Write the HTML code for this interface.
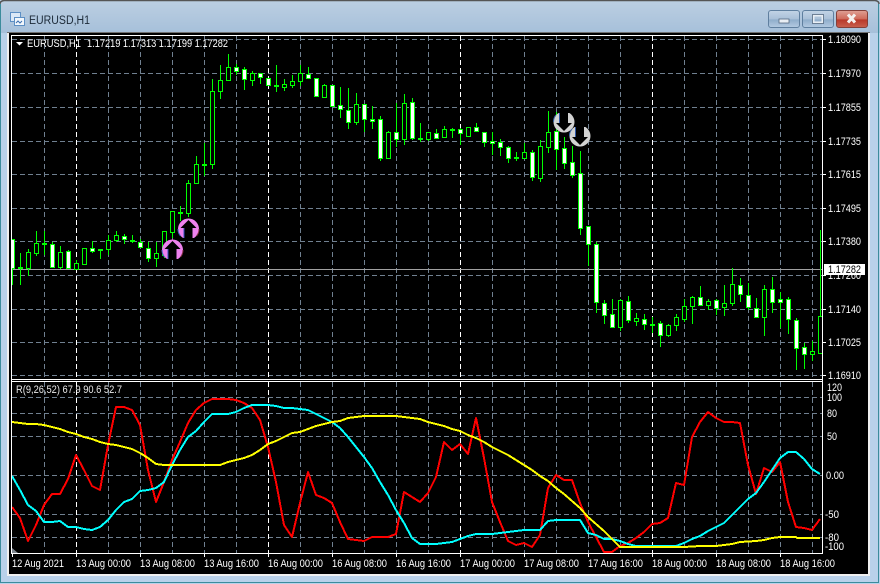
<!DOCTYPE html>
<html><head><meta charset="utf-8"><style>
html,body{margin:0;padding:0;background:#fff}
#w{position:relative;width:880px;height:584px;overflow:hidden}
svg{position:absolute;left:0;top:0;font-family:"Liberation Sans",sans-serif}
</style></head><body><div id="w">
<svg width="880" height="584" viewBox="0 0 880 584">
<defs>
<linearGradient id="t" x1="0" y1="0" x2="0" y2="1"><stop offset="0" stop-color="#bccfe2"/><stop offset="1" stop-color="#a6c0da"/></linearGradient>
<linearGradient id="b1" x1="0" y1="0" x2="0" y2="1"><stop offset="0" stop-color="#c3d4e6"/><stop offset=".5" stop-color="#a9c0d8"/><stop offset=".55" stop-color="#8fadcb"/><stop offset="1" stop-color="#b4cbe2"/></linearGradient>
<linearGradient id="b2" x1="0" y1="0" x2="0" y2="1"><stop offset="0" stop-color="#dfa095"/><stop offset=".5" stop-color="#cf6a5a"/><stop offset=".55" stop-color="#b8382a"/><stop offset="1" stop-color="#c9604e"/></linearGradient>
<clipPath id="c"><rect x="12" y="36" width="810" height="343"/></clipPath>
<clipPath id="d"><rect x="12" y="382" width="810" height="171"/></clipPath>
<clipPath id="u"><rect x="-12" y="-12" width="24" height="21"/></clipPath>
<clipPath id="v"><rect x="-12" y="-9" width="24" height="21"/></clipPath>
<g id="up" clip-path="url(#u)"><circle r="10.5" fill="#ee82ee"/><path d="M-10.5 0A10.5 10.5 0 0 0-8 7" fill="none" stroke="#4060c0"/><path d="M10.5 0A10.5 10.5 0 0 1 8 7" fill="none" stroke="#803040"/><path d="M0-9L8-1H4V10H-4V-1H-8Z" fill="#000"/><rect x="-5" y="-1" width="1" height="11" fill="#3050c0"/></g>
<g id="dn" clip-path="url(#v)"><circle r="10.5" fill="#d3d3d3"/><path d="M-10.5 0A10.5 10.5 0 0 1-8-7" fill="none" stroke="#4068a8"/><path d="M0 9L8 1H4V-10H-4V1H-8Z" fill="#000"/><rect x="-5" y="-10" width="1" height="11" fill="#3058a8"/></g>
</defs>
<rect width="880" height="584" fill="#b9d1ea"/>
<rect width="880" height="33" fill="url(#t)"/>
<path d="M0 4Q0 1 4 .5H875Q879 1 879 4" fill="none" stroke="#555" stroke-width="1.5"/>
<path d="M.5 4V582.5H878.5V4" fill="none" stroke="#3c8c9c"/>
<rect x="7" y="32" width="863" height="544" fill="#f0f0f0"/>
<rect x="9" y="33" width="859" height="541" fill="#000"/>
<path d="M7.5 33V32.5H870" fill="none" stroke="#707070"/>

<!-- icon -->
<rect x="10.5" y="12.5" width="10" height="9" fill="#dbe8f6" stroke="#5d8fc4"/>
<rect x="14.5" y="17.5" width="10" height="8" fill="#f2f7fc" stroke="#5d8fc4"/>
<path d="M16 23l2-2 2 2 2-2" fill="none" stroke="#3a6fb0"/>
<text x="29" y="24" font-size="11.5" fill="#1c2a38" textLength="61" lengthAdjust="spacingAndGlyphs">EURUSD,H1</text>

<!-- window buttons -->
<rect x="768.5" y="10.5" width="31" height="17" rx="2.5" fill="url(#b1)" stroke="#5f7f9f"/>
<rect x="779" y="19" width="10" height="4" fill="#e8eef4" stroke="#566a80" stroke-width=".8"/>
<rect x="802.5" y="10.5" width="31" height="17" rx="2.5" fill="url(#b1)" stroke="#5f7f9f"/>
<rect x="813.5" y="15.5" width="9" height="7" fill="none" stroke="#e8eef4" stroke-width="2"/>
<rect x="812.5" y="14.5" width="11" height="9" fill="none" stroke="#566a80" stroke-width=".8"/>
<rect x="836.5" y="10.5" width="31" height="17" rx="2.5" fill="url(#b2)" stroke="#84403a"/>
<path d="M848 14.5l7 8M855 14.5l-7 8" stroke="#f4f0ee" stroke-width="3"/>

<!-- grid main -->
<g shape-rendering="crispEdges" fill="none" stroke-dasharray="5 3">
<path stroke="#708090" d="M12 39.5H822M12 73.5H822M12 107.5H822M12 141.5H822M12 174.5H822M12 208.5H822M12 241.5H822M12 275.5H822M12 309.5H822M12 342.5H822M12 375.5H822M12 397.5H822M12 413.5H822M12 436.5H822M12 475.5H822M12 514.5H822M12 537.5H822"/>
<path stroke="#708090" d="M44.5 36V379M108.5 36V379M140.5 36V379M172.5 36V379M204.5 36V379M236.5 36V379M300.5 36V379M332.5 36V379M364.5 36V379M396.5 36V379M428.5 36V379M492.5 36V379M524.5 36V379M556.5 36V379M588.5 36V379M620.5 36V379M684.5 36V379M716.5 36V379M748.5 36V379M780.5 36V379M812.5 36V379"/>
<path stroke="#708090" d="M44.5 382V553M108.5 382V553M140.5 382V553M172.5 382V553M204.5 382V553M236.5 382V553M300.5 382V553M332.5 382V553M364.5 382V553M396.5 382V553M428.5 382V553M492.5 382V553M524.5 382V553M556.5 382V553M588.5 382V553M620.5 382V553M684.5 382V553M716.5 382V553M748.5 382V553M780.5 382V553M812.5 382V553"/>
<path stroke="#fff" d="M76.5 36V379M268.5 36V379M460.5 36V379M652.5 36V379M76.5 382V553M268.5 382V553M460.5 382V553M652.5 382V553"/>
</g>
<path d="M12 269.5H822" stroke="#a0a0a0" shape-rendering="crispEdges"/>

<!-- candles -->
<g clip-path="url(#c)" shape-rendering="crispEdges" stroke="#0f0" stroke-width="1">
<path fill="none" d="M12.5 239V285M20.5 253V285M28.5 249V276M36.5 231V256M44.5 231V255M52.5 242V267M60.5 246V269M68.5 250V269M76.5 260V269M84.5 248V265M92.5 241V253M100.5 249V259M108.5 235V255M116.5 231V242M124.5 234V244M132.5 235V243M140.5 239V248M148.5 242V262M156.5 242V267M164.5 231V258M172.5 211V238M180.5 206V221M188.5 180V217M196.5 156V183M204.5 143V176M212.5 79V169M220.5 65V99M228.5 54V81M236.5 64V75M244.5 67V90M252.5 71V86M260.5 73V84M268.5 78V86M276.5 65V92M284.5 79V91M292.5 75V88M300.5 65V86M308.5 67V79M316.5 78V97M324.5 84V97M332.5 85V106M340.5 87V118M348.5 88V129M356.5 93V125M364.5 104V132M372.5 106V129M380.5 116V161M388.5 131V158M396.5 103V147M404.5 94V145M412.5 98V140M420.5 123V142M428.5 132V141M436.5 129V139M444.5 126V138M452.5 128V138M460.5 128V145M468.5 127V136M476.5 123V132M484.5 132V147M492.5 132V155M500.5 139V156M508.5 146V163M516.5 152V161M524.5 143V158M532.5 150V181M540.5 140V182M548.5 111V153M556.5 112V170M564.5 137V169M572.5 146V178M580.5 151V235M588.5 226V266M596.5 242V313M604.5 300V324M612.5 299V327M620.5 299V331M628.5 296V323M636.5 313V326M644.5 314V330M652.5 317V333M660.5 321V347M668.5 324V337M676.5 314V331M684.5 299V322M692.5 296V324M700.5 286V306M708.5 299V310M716.5 299V315M724.5 285V316M732.5 268V306M740.5 278V302M748.5 283V310M756.5 298V317M764.5 285V336M772.5 277V313M780.5 292V328M788.5 297V334M796.5 318V370M804.5 343V369M812.5 341V361M820.5 230V353"/>
<path fill="#000" d="M26.5 252.5h4v16h-4zM34.5 243.5h4v10h-4zM58.5 252.5h4v15h-4zM74.5 263.5h4v6h-4zM82.5 248.5h4v16h-4zM106.5 240.5h4v9h-4zM114.5 235.5h4v5h-4zM154.5 253.5h4v5h-4zM162.5 231.5h4v24h-4zM170.5 211.5h4v21h-4zM186.5 183.5h4v30h-4zM194.5 164.5h4v19h-4zM210.5 91.5h4v73h-4zM218.5 80.5h4v11h-4zM226.5 67.5h4v13h-4zM250.5 73.5h4v7h-4zM282.5 84.5h4v3h-4zM290.5 81.5h4v4h-4zM298.5 73.5h4v8h-4zM322.5 85.5h4v12h-4zM354.5 104.5h4v18h-4zM386.5 132.5h4v26h-4zM402.5 103.5h4v36h-4zM426.5 132.5h4v7h-4zM442.5 129.5h4v8h-4zM466.5 127.5h4v9h-4zM522.5 152.5h4v6h-4zM538.5 146.5h4v32h-4zM546.5 132.5h4v15h-4zM618.5 300.5h4v27h-4zM634.5 318.5h4v3h-4zM666.5 325.5h4v10h-4zM674.5 317.5h4v8h-4zM682.5 306.5h4v13h-4zM690.5 297.5h4v9h-4zM706.5 301.5h4v4h-4zM722.5 303.5h4v4h-4zM730.5 284.5h4v19h-4zM762.5 289.5h4v28h-4zM810.5 351.5h4v3h-4zM818.5 316.5h4v37h-4z"/>
<path fill="#fff" d="M10.5 239.5h4v29h-4zM18.5 267.5h4v1h-4zM42.5 243.5h4v1h-4zM50.5 244.5h4v23h-4zM66.5 251.5h4v17h-4zM90.5 248.5h4v3h-4zM98.5 249.5h4v1h-4zM122.5 236.5h4v3h-4zM130.5 240.5h4v1h-4zM138.5 242.5h4v5h-4zM146.5 248.5h4v10h-4zM178.5 212.5h4v1h-4zM202.5 164.5h4v1h-4zM234.5 67.5h4v4h-4zM242.5 69.5h4v10h-4zM258.5 73.5h4v4h-4zM266.5 78.5h4v7h-4zM274.5 85.5h4v1h-4zM306.5 74.5h4v4h-4zM314.5 78.5h4v18h-4zM330.5 85.5h4v21h-4zM338.5 105.5h4v4h-4zM346.5 110.5h4v12h-4zM362.5 104.5h4v15h-4zM370.5 119.5h4v2h-4zM378.5 119.5h4v39h-4zM394.5 132.5h4v7h-4zM410.5 102.5h4v36h-4zM418.5 138.5h4v1h-4zM434.5 133.5h4v5h-4zM450.5 129.5h4v1h-4zM458.5 129.5h4v4h-4zM474.5 127.5h4v4h-4zM482.5 132.5h4v10h-4zM490.5 141.5h4v2h-4zM498.5 142.5h4v5h-4zM506.5 147.5h4v11h-4zM514.5 157.5h4v1h-4zM530.5 152.5h4v25h-4zM554.5 131.5h4v18h-4zM562.5 148.5h4v15h-4zM570.5 162.5h4v13h-4zM578.5 173.5h4v55h-4zM586.5 226.5h4v18h-4zM594.5 244.5h4v58h-4zM602.5 303.5h4v12h-4zM610.5 314.5h4v13h-4zM626.5 301.5h4v19h-4zM642.5 319.5h4v5h-4zM650.5 324.5h4v1h-4zM658.5 323.5h4v12h-4zM698.5 297.5h4v8h-4zM714.5 300.5h4v8h-4zM738.5 285.5h4v9h-4zM746.5 295.5h4v12h-4zM754.5 308.5h4v9h-4zM770.5 289.5h4v13h-4zM778.5 299.5h4v3h-4zM786.5 299.5h4v20h-4zM794.5 320.5h4v28h-4zM802.5 347.5h4v7h-4z"/>
</g>

<!-- arrows -->
<use href="#up" transform="translate(188.5 229)"/>
<use href="#up" transform="translate(172.5 250)"/>
<use href="#dn" transform="translate(564 122)"/>
<use href="#dn" transform="translate(580 136)"/>

<!-- indicator lines -->
<g clip-path="url(#d)" fill="none" stroke-width="2" stroke-linejoin="round" shape-rendering="crispEdges">
<polyline stroke="#f00" points="12,507 20,518 28,541 36,525 44,505 52,494 60,494 68,479 76,455 84,470 92,486 100,490 108,445 116,407 124,407 132,410 140,425 148,470 156,502 164,482 172,460 180,442 188,423 196,410 204,403 212,399 220,399 228,399 236,400 244,403 252,408 260,420 268,447 276,482 284,525 292,537 300,503 308,472 316,495 324,498 332,503 340,522 348,539 356,540 364,541 372,537 380,537 388,537 396,534 404,492 412,497 420,502 428,493 436,477 444,442 452,450 460,444 468,454 476,418 484,458 492,502 500,522 508,541 516,545 524,543 532,547 540,535 548,488 556,475 564,480 572,480 580,503 588,522 596,537 604,552 612,552 620,546 628,543 636,538 644,532 652,524 660,523 668,518 676,483 684,485 692,437 700,422 708,412 716,418 724,422 732,422 740,423 748,465 756,494 764,468 772,472 780,462 788,502 796,527 804,528 812,530 820,519"/>
<polyline stroke="#0ff" points="12,476 20,490 28,505 36,511 44,522 52,522 60,521 68,527 76,527 84,529 92,530 100,527 108,520 116,510 124,502 132,499 140,491 148,490 156,488 164,482 172,465 180,450 188,437 196,431 204,422 212,414 220,414 228,414 236,412 244,408 252,405 260,405 268,405 276,406 284,408 292,408 300,409 308,410 316,414 324,418 332,422 340,428 348,437 356,447 364,457 372,468 380,482 388,495 396,510 404,523 412,538 420,544 428,544 436,544 444,543 452,542 460,539 468,536 476,534 484,534 492,534 500,533 508,532 516,531 524,530 532,530 540,530 548,521 556,520 564,520 572,520 580,520 588,533 596,535 604,539 612,539 620,541 628,544 636,546 644,546 652,546 660,546 668,546 676,546 684,543 692,539 700,536 708,531 716,527 724,523 732,515 740,507 748,499 756,493 764,482 772,470 780,458 788,452 796,452 804,459 812,469 820,474"/>
<polyline stroke="#ff0" points="12,422 20,423 28,424 36,424 44,425 52,427 60,429 68,432 76,434 84,437 92,439 100,442 108,444 116,445 124,447 132,449 140,453 148,458 156,464 164,465 220,465 228,462 236,460 244,458 252,455 260,450 268,444 276,441 284,437 292,433 300,432 308,429 316,426 324,424 332,422 340,421 348,418 356,417 364,416 372,416 388,416 396,416 404,417 412,418 420,419 428,422 436,424 444,426 452,429 460,431 468,435 476,438 484,442 492,447 500,451 508,455 516,460 524,465 532,470 540,476 548,481 556,488 564,494 572,501 580,508 588,517 596,524 604,531 612,539 620,547 628,547 676,547 684,547 700,546 716,546 732,544 740,542 756,541 764,540 772,538 780,537 796,537 797,538 820,538"/>
</g>

<!-- frame lines -->
<path fill="none" stroke="#fff" shape-rendering="crispEdges" d="M11.5 35.5H822.5V553.5H11.5ZM12 379.5H822M12 381.5H822"/>
<path d="M12 548L18 553H12Z" fill="#808890"/>
<path stroke="#fff" shape-rendering="crispEdges" d="M823 39.5h3M823 73.5h3M823 107.5h3M823 141.5h3M823 174.5h3M823 208.5h3M823 241.5h3M823 275.5h3M823 309.5h3M823 342.5h3M823 375.5h3M12.5 554v3M76.5 554v3M140.5 554v3M204.5 554v3M268.5 554v3M332.5 554v3M396.5 554v3M460.5 554v3M524.5 554v3M588.5 554v3M652.5 554v3M716.5 554v3M780.5 554v3"/>

<!-- header texts -->
<path d="M16 42h7l-3.5 3.5z" fill="#fff"/>
<g fill="#fff" font-size="11">
<text x="27" y="47" textLength="54" lengthAdjust="spacingAndGlyphs">EURUSD,H1</text>
<text x="87" y="47" textLength="141" lengthAdjust="spacingAndGlyphs">1.17219 1.17313 1.17199 1.17282</text>
<text x="16" y="393" fill="#e8e8e8" textLength="106" lengthAdjust="spacingAndGlyphs">R(9,26,52) 67.9 90.6 52.7</text>

<!-- price scale -->
<g>
<text x="828" y="43" textLength="33" lengthAdjust="spacingAndGlyphs">1.18090</text>
<text x="828" y="77" textLength="33" lengthAdjust="spacingAndGlyphs">1.17970</text>
<text x="828" y="111" textLength="33" lengthAdjust="spacingAndGlyphs">1.17855</text>
<text x="828" y="145" textLength="33" lengthAdjust="spacingAndGlyphs">1.17735</text>
<text x="828" y="178" textLength="33" lengthAdjust="spacingAndGlyphs">1.17615</text>
<text x="828" y="212" textLength="33" lengthAdjust="spacingAndGlyphs">1.17495</text>
<text x="828" y="245" textLength="33" lengthAdjust="spacingAndGlyphs">1.17380</text>
<text x="828" y="279" textLength="33" lengthAdjust="spacingAndGlyphs">1.17260</text>
<text x="828" y="313" textLength="33" lengthAdjust="spacingAndGlyphs">1.17140</text>
<text x="828" y="346" textLength="33" lengthAdjust="spacingAndGlyphs">1.17025</text>
<text x="828" y="379" textLength="33" lengthAdjust="spacingAndGlyphs">1.16910</text>
</g>
<rect x="824" y="264" width="41" height="11" fill="#fff"/>
<text x="828" y="273" fill="#000" textLength="33" lengthAdjust="spacingAndGlyphs">1.17282</text>

<!-- indicator scale -->
<text x="827" y="391" textLength="15" lengthAdjust="spacingAndGlyphs">120</text>
<text x="827" y="401" textLength="15" lengthAdjust="spacingAndGlyphs">100</text>
<text x="827" y="417" textLength="10" lengthAdjust="spacingAndGlyphs">80</text>
<text x="827" y="440" textLength="10" lengthAdjust="spacingAndGlyphs">50</text>
<text x="826" y="479" textLength="18" lengthAdjust="spacingAndGlyphs">0.00</text>
<text x="825" y="518" textLength="14" lengthAdjust="spacingAndGlyphs">-50</text>
<text x="825" y="541" textLength="14" lengthAdjust="spacingAndGlyphs">-80</text>
<text x="825" y="550" textLength="19" lengthAdjust="spacingAndGlyphs">-100</text>

<!-- time scale -->
<text x="12" y="567" textLength="52" lengthAdjust="spacingAndGlyphs">12 Aug 2021</text>
<text x="76" y="567" textLength="55" lengthAdjust="spacingAndGlyphs">13 Aug 00:00</text>
<text x="140" y="567" textLength="55" lengthAdjust="spacingAndGlyphs">13 Aug 08:00</text>
<text x="204" y="567" textLength="55" lengthAdjust="spacingAndGlyphs">13 Aug 16:00</text>
<text x="268" y="567" textLength="55" lengthAdjust="spacingAndGlyphs">16 Aug 00:00</text>
<text x="332" y="567" textLength="55" lengthAdjust="spacingAndGlyphs">16 Aug 08:00</text>
<text x="396" y="567" textLength="55" lengthAdjust="spacingAndGlyphs">16 Aug 16:00</text>
<text x="460" y="567" textLength="55" lengthAdjust="spacingAndGlyphs">17 Aug 00:00</text>
<text x="524" y="567" textLength="55" lengthAdjust="spacingAndGlyphs">17 Aug 08:00</text>
<text x="588" y="567" textLength="55" lengthAdjust="spacingAndGlyphs">17 Aug 16:00</text>
<text x="652" y="567" textLength="55" lengthAdjust="spacingAndGlyphs">18 Aug 00:00</text>
<text x="716" y="567" textLength="55" lengthAdjust="spacingAndGlyphs">18 Aug 08:00</text>
<text x="780" y="567" textLength="55" lengthAdjust="spacingAndGlyphs">18 Aug 16:00</text>
</g>
</svg>
</div></body></html>
